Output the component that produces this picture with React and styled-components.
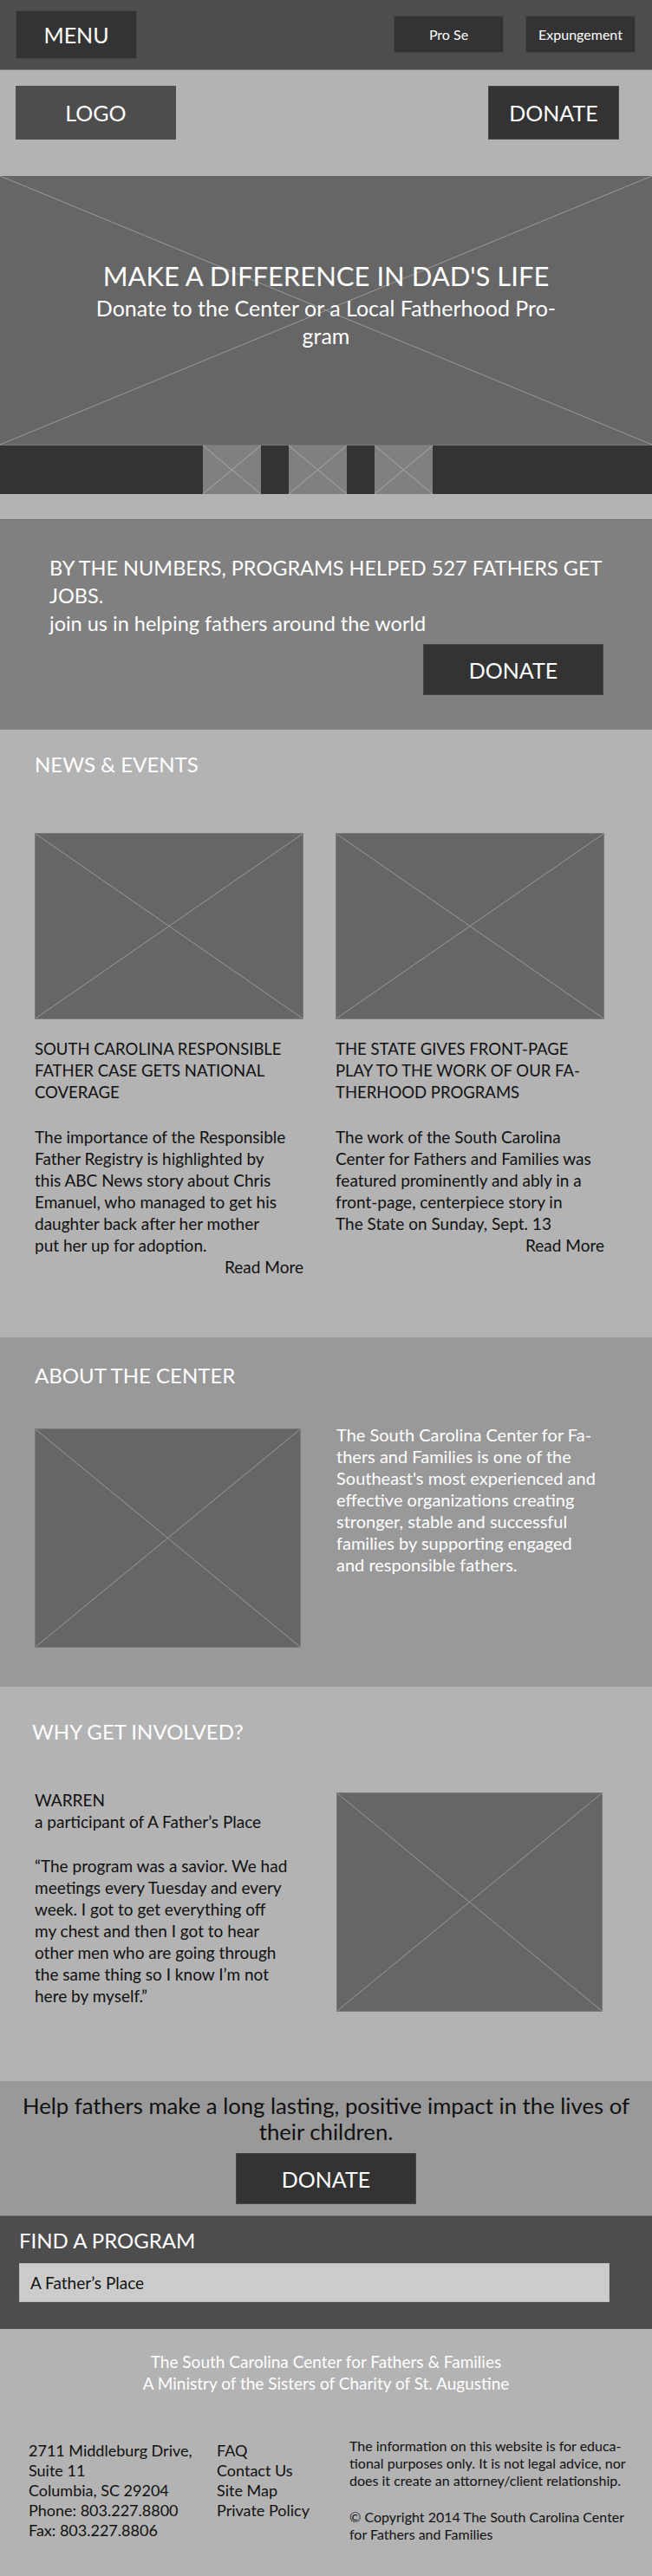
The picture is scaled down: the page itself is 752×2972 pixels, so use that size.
import React from "react";
import styled, { createGlobalStyle } from "styled-components";

const GlobalStyle = createGlobalStyle`
  body {
    margin: 0;
    background: #b3b3b3;
    font-family: Lato, "Liberation Sans", sans-serif;
  }
  * {
    box-sizing: border-box;
  }
`;

const Page = styled.div`
  width: 752px;
  display: flex;
  flex-direction: column;
`;

/* ---------- header ---------- */

const TopBar = styled.header`
  height: 81px;
  background: #4d4d4d;
  border-bottom: 1px solid #7a7a7a;
  display: flex;
  justify-content: space-between;
  align-items: flex-start;
  padding: 12px 19px 0 18px;
`;

const MenuButton = styled.div`
  width: 140px;
  height: 56px;
  background: #333;
  border: 1px solid #444;
  color: #fff;
  font-size: 25px;
  display: flex;
  align-items: center;
  justify-content: center;
`;

const NavGroup = styled.nav`
  display: flex;
  gap: 25px;
  padding-top: 6px;
`;

const NavButton = styled.div`
  width: 127px;
  height: 43px;
  background: #333;
  border: 1px solid #444;
  color: #fff;
  font-size: 16px;
  display: flex;
  align-items: center;
  justify-content: center;
`;

const LogoBar = styled.div`
  height: 122px;
  background: #b3b3b3;
  display: flex;
  justify-content: space-between;
  align-items: flex-start;
  padding: 18px 38px 0 18px;
`;

const Logo = styled.div`
  width: 185px;
  height: 62px;
  background: #4d4d4d;
  color: #fff;
  font-size: 25px;
  display: flex;
  align-items: center;
  justify-content: center;
`;

const DonateButton = styled.div`
  width: ${(p) => (p.$compact ? 151 : 208)}px;
  height: ${(p) => (p.$compact ? 62 : 59)}px;
  background: #333;
  border: 1px solid #474747;
  color: #fff;
  font-size: 25px;
  display: flex;
  align-items: center;
  justify-content: center;
`;

/* ---------- hero ---------- */

const Hero = styled.section`
  position: relative;
  height: 310px;
  background: #666;
  color: #fff;
  text-align: center;
  padding-top: 96px;
`;

const HeroCross = styled.svg`
  position: absolute;
  inset: 0;
  width: 100%;
  height: 100%;
`;

const HeroText = styled.div`
  position: relative;
`;

const HeroTitle = styled.h1`
  margin: 0;
  font-weight: normal;
  font-size: 31px;
  line-height: 38px;
`;

const HeroSub = styled.p`
  margin: 2px 0 0;
  font-size: 25px;
  line-height: 32px;
`;

const ThumbStrip = styled.div`
  height: 57px;
  background: #333;
  border-top: 1px solid #777;
  display: flex;
  padding-left: 234px;
  gap: 32px;
`;

const Thumb = styled.div`
  width: 67px;
  height: 56px;
  background: #808080;
`;

const Gap = styled.div`
  height: 29px;
  background: #b3b3b3;
`;

/* ---------- stats ---------- */

const Stats = styled.section`
  height: 243px;
  background: #808080;
  border-top: 1px solid #727272;
  border-bottom: 1px solid #8a8a8a;
  padding: 39px 56px 0 57px;
  color: #fff;
  display: flex;
  flex-direction: column;
`;

const StatsText = styled.p`
  margin: 0;
  font-size: 23.5px;
  line-height: 32px;
  white-space: nowrap;
`;

const DonateRow = styled.div`
  display: flex;
  justify-content: flex-end;
  margin-top: 8px;
`;

/* ---------- content sections ---------- */

const Section = styled.section`
  height: ${(p) => p.$h}px;
  background: ${(p) => p.$bg};
  padding: ${(p) => p.$pad};
`;

const SectionTitle = styled.h2`
  margin: 0;
  font-weight: normal;
  color: #fff;
  font-size: 24px;
  line-height: 32px;
`;

const NewsGrid = styled.div`
  display: grid;
  grid-template-columns: 310px 310px;
  column-gap: 37px;
  margin-top: 63px;
`;

const Placeholder = styled.div`
  width: ${(p) => p.$w}px;
  height: ${(p) => p.$h}px;
  background: #666;
  border: 1px solid #7a7a7a;
  margin-top: ${(p) => p.$mt || 0}px;
`;

const CrossSvg = styled.svg`
  display: block;
  width: 100%;
  height: 100%;
`;

const NewsTitle = styled.h3`
  margin: 22px 0 0;
  font-weight: normal;
  font-size: 18.5px;
  line-height: 25px;
  color: #111;
  white-space: nowrap;
`;

const Body = styled.p`
  margin: ${(p) => p.$m || "0"};
  font-size: ${(p) => (p.$light ? 20 : 19)}px;
  line-height: 25px;
  color: ${(p) => (p.$light ? "#fff" : "#111")};
  white-space: nowrap;
`;

const ReadMore = styled.div`
  text-align: right;
  font-size: 19px;
  line-height: 25px;
  color: #111;
`;

const TwoCol = styled.div`
  display: grid;
  grid-template-columns: ${(p) => p.$cols};
  margin-top: ${(p) => p.$mt}px;
  align-items: start;
`;

const QuoteCol = styled.div`
  padding-left: 3px;
`;

/* ---------- call to action ---------- */

const Cta = styled.section`
  height: 155px;
  background: #999;
  padding-top: 13px;
  display: flex;
  flex-direction: column;
  align-items: center;
  gap: 10px;
  text-align: center;
`;

const CtaText = styled.p`
  margin: 0;
  font-size: 25.7px;
  line-height: 30px;
  color: #111;
`;

const FindBar = styled.section`
  height: 131px;
  background: #4d4d4d;
  border-top: 1px solid #6a6a6a;
  padding: 12px 0 0 22px;
  display: flex;
  flex-direction: column;
  gap: 10px;
`;

const ProgramInput = styled.div`
  width: 681px;
  height: 45px;
  background: #ccc;
  border: 1px solid #bdbdbd;
  color: #111;
  font-size: 19px;
  display: flex;
  align-items: center;
  padding-left: 12px;
`;

/* ---------- footer ---------- */

const Footer = styled.footer`
  height: 285px;
  background: #b3b3b3;
  padding-top: 25px;
`;

const FooterCenter = styled.p`
  margin: 0;
  text-align: center;
  color: #fff;
  font-size: 19px;
  line-height: 25px;
`;

const FooterCols = styled.div`
  display: grid;
  grid-template-columns: 217px 153px 1fr;
  padding-left: 33px;
  margin-top: 50px;
  align-items: start;
`;

const FooterList = styled.div`
  display: flex;
  flex-direction: column;
  margin-top: 4px;
  font-size: 18px;
  line-height: 23px;
  color: #111;
  white-space: nowrap;
`;

const Legal = styled.p`
  margin: ${(p) => p.$m || "0"};
  font-size: 16px;
  line-height: 20px;
  color: #111;
  white-space: nowrap;
`;

const Cross = ({ color = "#999" }) => (
  <CrossSvg viewBox="0 0 100 100" preserveAspectRatio="none">
    <line x1="0" y1="0" x2="100" y2="100" stroke={color} strokeWidth="1" vectorEffect="non-scaling-stroke" />
    <line x1="100" y1="0" x2="0" y2="100" stroke={color} strokeWidth="1" vectorEffect="non-scaling-stroke" />
  </CrossSvg>
);

const news = [
  {
    title: ["SOUTH CAROLINA RESPONSIBLE", "FATHER CASE GETS NATIONAL", "COVERAGE"],
    body: [
      "The importance of the Responsible",
      "Father Registry is highlighted by",
      "this ABC News story about Chris",
      "Emanuel, who managed to get his",
      "daughter back after her mother",
      "put her up for adoption."
    ]
  },
  {
    title: ["THE STATE GIVES FRONT-PAGE", "PLAY TO THE WORK OF OUR FA-", "THERHOOD PROGRAMS"],
    body: [
      "The work of the South Carolina",
      "Center for Fathers and Families was",
      "featured prominently and ably in a",
      "front-page, centerpiece story in",
      "The State on Sunday, Sept. 13"
    ]
  }
];

const lines = (arr) =>
  arr.map((l, i) => (
    <React.Fragment key={i}>
      {l}
      {i < arr.length - 1 && <br />}
    </React.Fragment>
  ));

export default function App() {
  return (
    <Page>
      <GlobalStyle />
      <TopBar>
        <MenuButton>MENU</MenuButton>
        <NavGroup>
          <NavButton>Pro Se</NavButton>
          <NavButton>Expungement</NavButton>
        </NavGroup>
      </TopBar>

      <LogoBar>
        <Logo>LOGO</Logo>
        <DonateButton $compact>DONATE</DonateButton>
      </LogoBar>

      <Hero>
        <HeroCross viewBox="0 0 100 100" preserveAspectRatio="none">
          <line x1="0" y1="0" x2="100" y2="100" stroke="#999" vectorEffect="non-scaling-stroke" />
          <line x1="100" y1="0" x2="0" y2="100" stroke="#999" vectorEffect="non-scaling-stroke" />
        </HeroCross>
        <HeroText>
          <HeroTitle>MAKE A DIFFERENCE IN DAD'S LIFE</HeroTitle>
          <HeroSub>{lines(["Donate to the Center or a Local Fatherhood Pro-", "gram"])}</HeroSub>
        </HeroText>
      </Hero>

      <ThumbStrip>
        <Thumb><Cross color="#aaa" /></Thumb>
        <Thumb><Cross color="#aaa" /></Thumb>
        <Thumb><Cross color="#aaa" /></Thumb>
      </ThumbStrip>

      <Gap />

      <Stats>
        <StatsText>
          {lines([
            "BY THE NUMBERS, PROGRAMS HELPED 527 FATHERS GET",
            "JOBS.",
            "join us in helping fathers around the world"
          ])}
        </StatsText>
        <DonateRow>
          <DonateButton>DONATE</DonateButton>
        </DonateRow>
      </Stats>

      <Section $h={701} $bg="#b3b3b3" $pad="24px 0 0 40px">
        <SectionTitle>NEWS &amp; EVENTS</SectionTitle>
        <NewsGrid>
          {news.map((n, i) => (
            <div key={i}>
              <Placeholder $w={310} $h={215}><Cross /></Placeholder>
              <NewsTitle>{lines(n.title)}</NewsTitle>
              <Body $m="26px 0 0">{lines(n.body)}</Body>
              <ReadMore>Read More</ReadMore>
            </div>
          ))}
        </NewsGrid>
      </Section>

      <Section $h={403} $bg="#999" $pad="28px 0 0 40px">
        <SectionTitle>ABOUT THE CENTER</SectionTitle>
        <TwoCol $cols="348px 1fr" $mt={40}>
          <Placeholder $w={307} $h={253} $mt={5}><Cross /></Placeholder>
          <Body $light>
            {lines([
              "The South Carolina Center for Fa-",
              "thers and Families is one of the",
              "Southeast's most experienced and",
              "effective organizations creating",
              "stronger, stable and successful",
              "families by supporting engaged",
              "and responsible fathers."
            ])}
          </Body>
        </TwoCol>
      </Section>

      <Section $h={455} $bg="#b3b3b3" $pad="36px 0 0 37px">
        <SectionTitle>WHY GET INVOLVED?</SectionTitle>
        <TwoCol $cols="351px 1fr" $mt={50}>
          <QuoteCol>
            <Body>{lines(["WARREN", "a participant of A Father’s Place"])}</Body>
            <Body $m="26px 0 0">
              {lines([
                "“The program was a savior. We had",
                "meetings every Tuesday and every",
                "week. I got to get everything off",
                "my chest and then I got to hear",
                "other men who are going through",
                "the same thing so I know I’m not",
                "here by myself.”"
              ])}
            </Body>
          </QuoteCol>
          <Placeholder $w={307} $h={253} $mt={4}><Cross /></Placeholder>
        </TwoCol>
      </Section>

      <Cta>
        <CtaText>
          {lines(["Help fathers make a long lasting, positive impact in the lives of", "their children."])}
        </CtaText>
        <DonateButton>DONATE</DonateButton>
      </Cta>

      <FindBar>
        <SectionTitle>FIND A PROGRAM</SectionTitle>
        <ProgramInput>A Father’s Place</ProgramInput>
      </FindBar>

      <Footer>
        <FooterCenter>
          {lines([
            "The South Carolina Center for Fathers & Families",
            "A Ministry of the Sisters of Charity of St. Augustine"
          ])}
        </FooterCenter>
        <FooterCols>
          <FooterList>
            <span>2711 Middleburg Drive,</span>
            <span>Suite 11</span>
            <span>Columbia, SC 29204</span>
            <span>Phone: 803.227.8800</span>
            <span>Fax: 803.227.8806</span>
          </FooterList>
          <FooterList>
            <span>FAQ</span>
            <span>Contact Us</span>
            <span>Site Map</span>
            <span>Private Policy</span>
          </FooterList>
          <div>
            <Legal>
              {lines([
                "The information on this website is for educa-",
                "tional purposes only. It is not legal advice, nor",
                "does it create an attorney/client relationship."
              ])}
            </Legal>
            <Legal $m="22px 0 0">
              {lines(["© Copyright 2014 The South Carolina Center", "for Fathers and Families"])}
            </Legal>
          </div>
        </FooterCols>
      </Footer>
    </Page>
  );
}
